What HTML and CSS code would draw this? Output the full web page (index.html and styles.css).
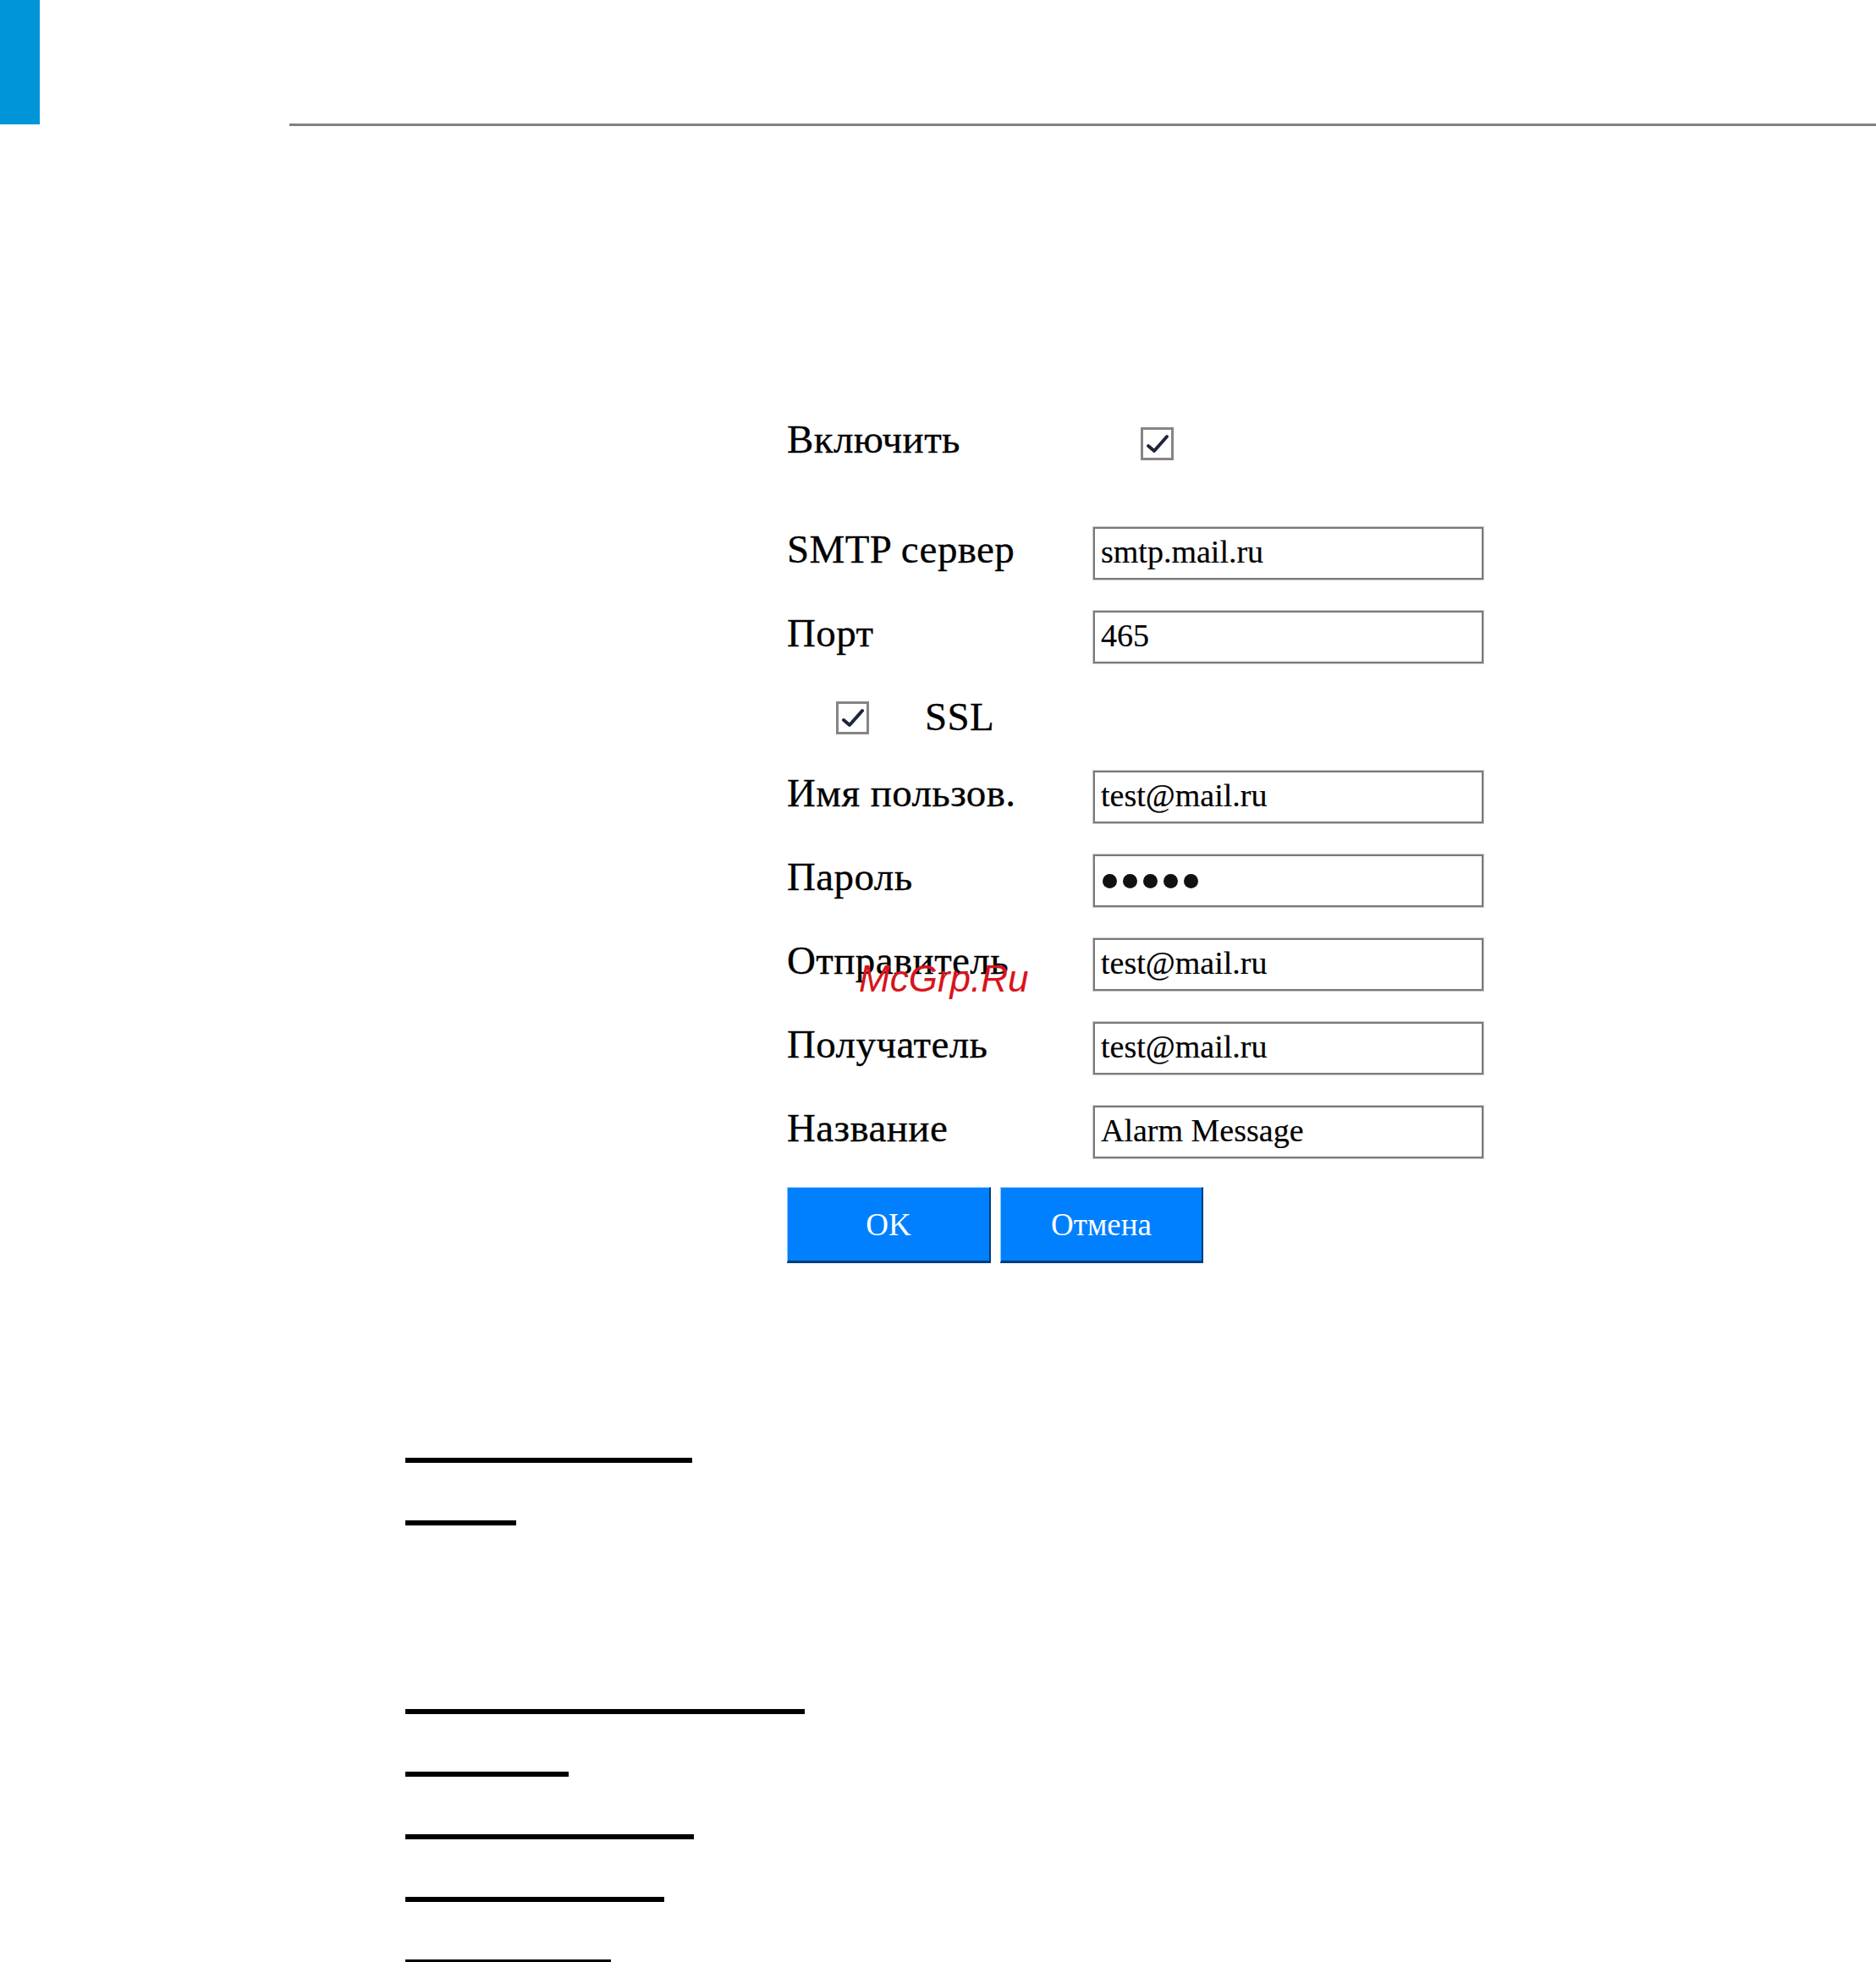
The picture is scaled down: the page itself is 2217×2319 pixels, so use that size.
FILE: index.html
```html
<!DOCTYPE html>
<html lang="ru">
<head>
<meta charset="utf-8">
<title>SMTP</title>
<link rel="stylesheet" href="styles.css">
</head>
<body>
<div class="page">
  <div class="header">
    <div class="brand"></div>
    <div class="rule"></div>
  </div>

  <div class="form">
    <div class="row row-enable">
      <div class="label">Включить</div>
      <div class="cell-check">
        <div class="check">
          <svg viewBox="0 0 33 33" width="33" height="33"><polyline points="6,19 13,25 28,8" fill="none" stroke="#1d2738" stroke-width="4" stroke-linecap="round" stroke-linejoin="round"/></svg>
        </div>
      </div>
    </div>

    <div class="row row-first">
      <div class="label">SMTP сервер</div>
      <div class="field">smtp.mail.ru</div>
    </div>
    <div class="row">
      <div class="label">Порт</div>
      <div class="field">465</div>
    </div>

    <div class="ssl-row">
      <div class="check">
        <svg viewBox="0 0 33 33" width="33" height="33"><polyline points="6,19 13,25 28,8" fill="none" stroke="#1d2738" stroke-width="4" stroke-linecap="round" stroke-linejoin="round"/></svg>
      </div>
      <div class="label">SSL</div>
    </div>

    <div class="row">
      <div class="label">Имя пользов.</div>
      <div class="field">test@mail.ru</div>
    </div>
    <div class="row">
      <div class="label">Пароль</div>
      <div class="field field-pass"><span class="dot"></span><span class="dot"></span><span class="dot"></span><span class="dot"></span><span class="dot"></span></div>
    </div>
    <div class="row">
      <div class="label">Отправитель</div>
      <div class="field">test@mail.ru</div>
    </div>
    <div class="row">
      <div class="label">Получатель</div>
      <div class="field">test@mail.ru</div>
    </div>
    <div class="row">
      <div class="label">Название</div>
      <div class="field">Alarm Message</div>
    </div>

    <div class="buttons">
      <div class="btn btn-ok">OK</div>
      <div class="btn btn-cancel">Отмена</div>
    </div>
  </div>

  <div class="links">
    <div class="links-group">
      <div class="bar bar-1"></div>
      <div class="bar bar-2"></div>
    </div>
    <div class="links-group">
      <div class="bar bar-3"></div>
      <div class="bar bar-4"></div>
      <div class="bar bar-5"></div>
      <div class="bar bar-6"></div>
      <div class="bar bar-7"></div>
    </div>
  </div>

  <div class="watermark">McGrp.Ru</div>
</div>
</body>
</html>
```

FILE: styles.css
```css
html, body {
  margin: 0;
  padding: 0;
  background: #ffffff;
}

body {
  font-family: "Liberation Serif", "Times New Roman", serif;
  color: #000000;
}

.page {
  position: relative;
  width: 2217px;
  height: 2319px;
  overflow: hidden;
}

/* header */
.header {
  display: flex;
  height: 149px;
}

.brand {
  width: 47px;
  height: 147px;
  background: #0095d9;
  align-self: flex-start;
}

.rule {
  flex: 1;
  margin-left: 295px;
  height: 3px;
  align-self: flex-end;
  background: #808080;
}

/* form */
.form {
  margin: 344px 0 0 930px;
  width: 823px;
}

.row {
  display: grid;
  grid-template-columns: 362px 461px;
  height: 62px;
  margin-top: 37px;
}

.row-enable {
  height: 53px;
  margin-top: 0;
}

.row-first {
  margin-top: 77px;
}

.label {
  font-size: 47px;
  line-height: 53px;
  letter-spacing: 0.4px;
  white-space: nowrap;
  -webkit-text-stroke: 0.3px #000000;
}

.cell-check {
  padding-left: 56px;
  padding-top: 12px;
}

.check {
  width: 39px;
  height: 39px;
  box-sizing: border-box;
  border: 3px solid #858585;
  background: #ffffff;
}

.check svg {
  display: block;
}

.ssl-row {
  display: flex;
  align-items: flex-start;
  height: 53px;
  margin-top: 37px;
  padding-left: 58px;
  gap: 66px;
}

.ssl-row .check {
  margin-top: 8px;
}

.field {
  box-sizing: border-box;
  height: 62px;
  border: 2px solid #7a7a7a;
  box-shadow: 0 0 0 1px #c6c6c6;
  background: #ffffff;
  padding-left: 7px;
  font-size: 38px;
  line-height: 54px;
  white-space: nowrap;
  overflow: hidden;
  -webkit-text-stroke: 0.2px #000000;
}

.field-pass {
  display: flex;
  align-items: center;
  gap: 7px;
  padding-left: 9px;
}

.dot {
  width: 17px;
  height: 17px;
  border-radius: 50%;
  background: #111111;
}

/* buttons */
.buttons {
  display: flex;
  gap: 11px;
  margin-top: 34px;
}

.btn {
  box-sizing: border-box;
  height: 90px;
  display: flex;
  align-items: center;
  justify-content: center;
  background: #0080ff;
  color: #ffffff;
  font-size: 37px;
  border-top: 1px solid #8cc6ff;
  border-left: 1px solid #8cc6ff;
  border-right: 2px solid #003d7a;
  border-bottom: 3px solid #003d7a;
}

.btn-ok {
  width: 241px;
}

.btn-cancel {
  width: 240px;
}

/* link bars */
.links {
  margin: 230px 0 0 479px;
}

.links-group {
  display: flex;
  flex-direction: column;
  gap: 68px;
}

.links-group + .links-group {
  margin-top: 217px;
}

.bar {
  height: 6px;
  background: #000000;
}

.bar-1 { width: 339px; }
.bar-2 { width: 131px; }
.bar-3 { width: 472px; }
.bar-4 { width: 193px; }
.bar-5 { width: 341px; }
.bar-6 { width: 306px; }
.bar-7 { width: 243px; }

/* watermark overlay */
.watermark {
  position: absolute;
  left: 1015px;
  top: 1135px;
  font-family: "Liberation Sans", Arial, sans-serif;
  font-style: italic;
  font-size: 44px;
  line-height: 44px;
  color: #d9141c;
  white-space: nowrap;
}
```
